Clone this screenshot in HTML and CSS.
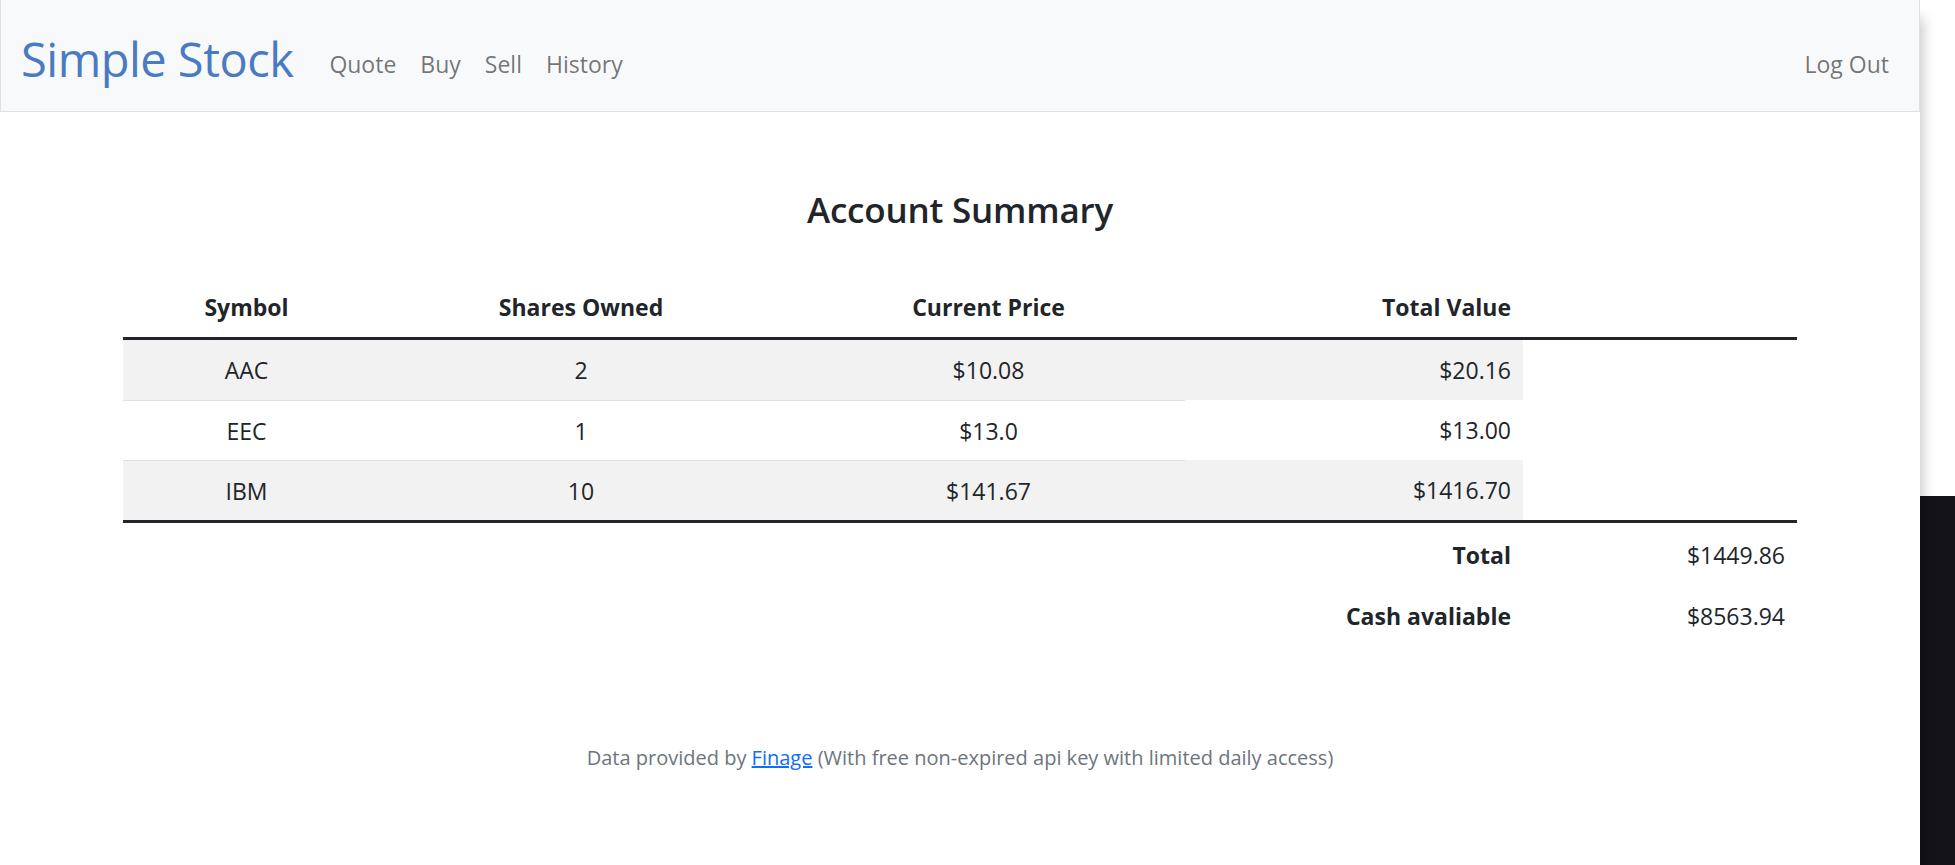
FILE: index.html
```html
<!DOCTYPE html>
<html lang="en">
<head>
<meta charset="utf-8">
<title>Simple Stock</title>
<link rel="stylesheet" href="styles.css">
</head>
<body>
<div class="page">
  <nav class="navbar">
    <a class="brand" href="#">Simple Stock</a>
    <ul class="nav-main">
      <li><a class="nav-link" href="#">Quote</a></li>
      <li><a class="nav-link" href="#">Buy</a></li>
      <li><a class="nav-link" href="#">Sell</a></li>
      <li><a class="nav-link" href="#">History</a></li>
    </ul>
    <ul class="nav-right">
      <li><a class="nav-link" href="#">Log Out</a></li>
    </ul>
  </nav>
  <main class="container">
    <h4 class="title">Account Summary</h4>
    <table class="summary">
      <colgroup>
        <col class="c-sym"><col class="c-shares"><col class="c-price"><col class="c-total"><col class="c-extra">
      </colgroup>
      <thead>
        <tr><th>Symbol</th><th>Shares Owned</th><th>Current Price</th><th class="right">Total Value</th><th></th></tr>
      </thead>
      <tbody>
        <tr class="odd"><td>AAC</td><td>2</td><td>$10.08</td><td class="right value">$20.16</td></tr>
        <tr><td>EEC</td><td>1</td><td>$13.0</td><td class="right value">$13.00</td></tr>
        <tr class="odd"><td>IBM</td><td>10</td><td>$141.67</td><td class="right value">$1416.70</td></tr>
      </tbody>
      <tfoot>
        <tr><td></td><td></td><td></td><th class="right">Total</th><td class="right">$1449.86</td></tr>
        <tr><td></td><td></td><td></td><th class="right">Cash avaliable</th><td class="right">$8563.94</td></tr>
      </tfoot>
    </table>
    <p class="credit">Data provided by <a href="#">Finage</a> (With free non-expired api key with limited daily access)</p>
  </main>
</div>
<div class="backdrop">
  <div class="backdrop-top"></div>
  <div class="backdrop-bottom"></div>
</div>
</body>
</html>
```
FILE: styles.css
```css
* { box-sizing: border-box; }
html, body { margin: 0; padding: 0; }
body {
  display: flex;
  height: 865px;
  overflow: hidden;
  font-family: "Open Sans", "Noto Sans", "Liberation Sans", sans-serif;
  color: #212529;
  background: #ffffff;
}
.page {
  width: 1920px;
  flex: 0 0 1920px;
  background: #ffffff;
  position: relative;
  z-index: 1;
  box-shadow: 3px 18px 12px rgba(0, 0, 0, 0.22);
}
.backdrop {
  flex: 1;
  display: flex;
  flex-direction: column;
}
.backdrop-top { height: 496px; background: #ffffff; }
.backdrop-bottom { flex: 1; background: #131318; }

.navbar {
  display: flex;
  align-items: center;
  height: 112px;
  padding: 16px 18px 10px 20px;
  background: #f8f9fa;
  border: 1px solid #dee2e6;
  border-top: 0;
}
.brand {
  font-size: 47px;
  line-height: 72px;
  color: #4a7bc2;
  text-decoration: none;
  margin-right: 24px;
  letter-spacing: -0.5px;
}
.nav-main, .nav-right {
  display: flex;
  list-style: none;
  margin: 0;
  padding: 0;
}
.nav-right { margin-left: auto; }
.nav-link {
  display: block;
  padding: 10px 12px 0;
  font-size: 23px;
  line-height: 36px;
  color: rgba(0, 0, 0, 0.55);
  text-decoration: none;
}

.container {
  width: 1710px;
  margin: 0 auto;
  padding: 0 18px;
}
.title {
  margin: 76px 0 46px;
  text-align: center;
  font-size: 35px;
  line-height: 43px;
  font-weight: 600;
  letter-spacing: -0.2px;
}
.summary {
  width: 100%;
  border-collapse: collapse;
  table-layout: fixed;
  font-size: 23px;
}
.c-sym { width: 247px; }
.c-shares { width: 422px; }
.c-price { width: 393px; }
.c-total { width: 338px; }
.c-extra { width: 274px; }
.summary th, .summary td {
  padding: 12px;
  line-height: 36px;
  text-align: center;
  font-weight: 400;
}
.summary th { font-weight: 700; }
.summary thead th { border-bottom: 3px solid #212529; }
.summary tbody td { border-bottom: 1px solid #dee2e6; padding-bottom: 11px; }
.summary tbody td.value { border-bottom: 0; padding-bottom: 12px; }
.summary tbody tr.odd td { background: #f2f2f2; }
.summary tfoot tr:first-child td, .summary tfoot tr:first-child th { border-top: 3px solid #212529; }
.summary tfoot td, .summary tfoot th { padding-top: 14px; padding-bottom: 11px; }
.summary .right { text-align: right; }

.credit {
  margin: 98px 0 0;
  text-align: center;
  font-size: 20px;
  line-height: 30px;
  color: #6c757d;
}
.credit a { color: #0d6efd; text-decoration: underline; }
```
